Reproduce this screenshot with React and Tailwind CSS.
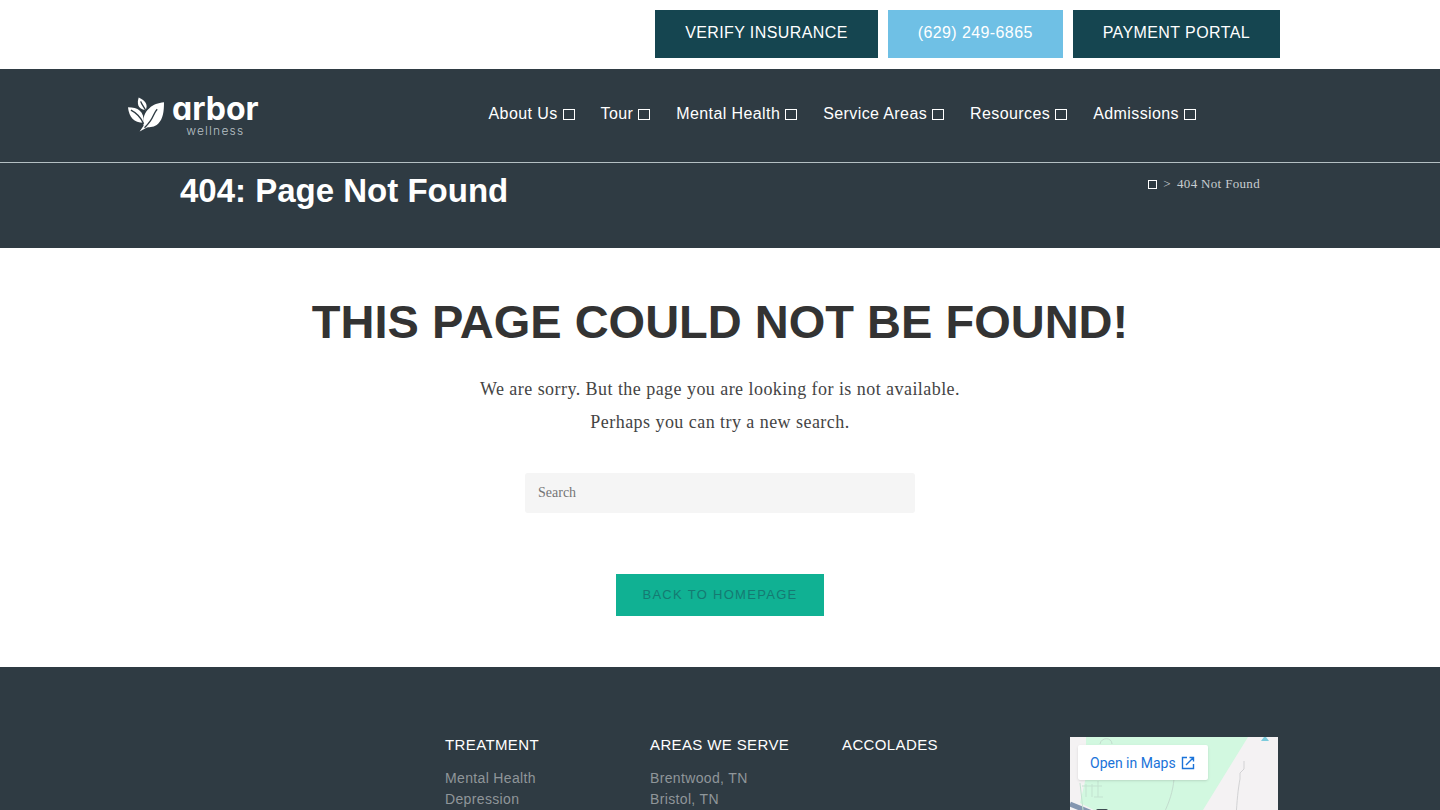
import React from "react";

const SANS = "font-['Liberation_Sans',Arial,sans-serif]";
const SERIF = "font-['Liberation_Serif','Times_New_Roman',serif]";

const actions = [
  { label: "VERIFY INSURANCE", className: "bg-[#154550]" },
  { label: "(629) 249-6865", className: "bg-[#6fc0e5]" },
  { label: "PAYMENT PORTAL", className: "bg-[#154550]" },
];

const menu = ["About Us", "Tour", "Mental Health", "Service Areas", "Resources", "Admissions"];

const footerColumns = [
  { title: "TREATMENT", links: ["Mental Health", "Depression"] },
  { title: "AREAS WE SERVE", links: ["Brentwood, TN", "Bristol, TN"] },
  { title: "ACCOLADES", links: [] },
];

const Logo = () => (
  <a href="#" className="flex items-start gap-2 text-white">
    <svg viewBox="0 0 37 36" className="mt-1 h-9 w-9 shrink-0" fill="currentColor">
      <path d="M11 0C18 3 21 8 18 13C10 12 9 6 11 0Z" />
      <path d="M0 10C10 10 17 14 16 26C6 26 1 20 0 10Z" />
      <path d="M37 5C37 15 36 22 31 27C27 31 23 30 19 31L12 35L16 29C15 21 17 15 22 11C26 7 31 6 37 5Z" />
      <g fill="none" stroke="#2f3b43" strokeWidth="1.4">
        <path d="M13 4C14 7 16 9 18 13" />
        <path d="M3 13C9 16 13 20 16 27" />
        <path d="M30 12C27 15 26 20 23 24C21 27 19 29 17 31" />
      </g>
    </svg>
    <span className="flex flex-col items-center">
      <span className="font-['Inter',sans-serif] text-[32px] leading-8 font-bold [font-feature-settings:'cv11','ss03']">
        arbor
      </span>
      <span className="font-['Inter',sans-serif] text-xs leading-3 font-light tracking-widest text-[#b9c1c6]">
        wellness
      </span>
    </span>
  </a>
);

const Header = () => (
  <header className="border-b border-[#b4bfc3] bg-[#2f3b43]">
    <div className="mx-auto flex max-w-[1200px] flex-wrap items-start justify-between px-2 pt-6 pb-[25px] lg:pr-[124px]">
      <Logo />
      <nav className="flex flex-wrap gap-x-[26px] pt-[9px]">
        {menu.map((item) => (
          <a key={item} href="#" className="flex items-center gap-[5px] text-base tracking-wide text-white">
            {item}
            <span className="h-[11px] w-3 border border-white" />
          </a>
        ))}
      </nav>
    </div>
  </header>
);

const MapCard = () => (
  <div className="relative min-h-[73px] overflow-hidden bg-[#f4f2f3]">
    <svg viewBox="0 0 208 73" preserveAspectRatio="xMinYMin slice" className="h-full w-full" fill="none">
      <path d="M16 0H178L133 73H24L10 66L16 40Z" fill="#d2f8e0" />
      <path d="M0 67L22 76" stroke="#8496b0" strokeWidth="5" />
      <path d="M10 46L13 73M16 47V60M22 47V60M28 44V60M12 49H32M24 60H33" stroke="#c3e2d0" />
      <path d="M30 7C31 0 42 0 42 7M104 42C103 54 99 66 94 76" stroke="#c3dcce" />
      <path d="M174 24V32L170 36V42C168 52 167 64 166 80" stroke="#d2d2d4" />
      <path d="M191 4L194 0H196L199 4Z" fill="#7ccbdc" />
      <rect x="26" y="72" width="12" height="6" rx="2" fill="#3c4a50" />
    </svg>
    <a
      href="#"
      className="absolute top-2 left-2 flex h-[35px] items-center gap-1 rounded-xs bg-white px-3 font-['Roboto',sans-serif] text-sm text-[#1a73d9] shadow"
    >
      Open in Maps
      <svg viewBox="0 0 16 16" className="h-4 w-4" fill="none" stroke="currentColor" strokeWidth="1.4">
        <path d="M7 2.5H2.5V13.5H13.5V9M9.5 2.5H13.5V6.5M13.5 2.5L6 10" />
      </svg>
    </a>
  </div>
);

const Footer = () => (
  <footer className="flex-1 bg-[#2f3b43] pt-[70px]">
    <div className="mx-auto grid max-w-[1120px] grid-cols-[285fr_205fr_192fr_228fr_208fr] pr-0.5">
      <div />
      {footerColumns.map((column) => (
        <div key={column.title}>
          <h4 className="text-[15px] leading-4 tracking-wide text-white">{column.title}</h4>
          <ul className="mt-[15px] text-sm leading-[21px] tracking-wide text-[#8f969a]">
            {column.links.map((link) => (
              <li key={link}>
                <a href="#">{link}</a>
              </li>
            ))}
          </ul>
        </div>
      ))}
      <MapCard />
    </div>
  </footer>
);

const App = () => {
  return (
    <div className={`flex min-h-screen flex-col bg-white ${SANS}`}>
      {/* Top bar */}
      <div className="mx-auto flex w-full max-w-[1120px] flex-wrap justify-end gap-2.5 pt-2.5 pb-[11px]">
        {actions.map((action) => (
          <a
            key={action.label}
            href="#"
            className={`px-[30px] pt-[11px] pb-[13px] text-base tracking-wide text-white ${action.className}`}
          >
            {action.label}
          </a>
        ))}
      </div>

      <Header />

      {/* Page title */}
      <div className="bg-[#2f3b43] pt-2 pb-[37px]">
        <div className="mx-auto flex max-w-[1080px] items-start justify-between">
          <h1 className="text-[33px] leading-10 font-bold text-white">404: Page Not Found</h1>
          <nav
            aria-label="Breadcrumb"
            className={`flex items-center gap-1.5 pt-[3px] text-[13px] leading-5 tracking-wide text-[#c8cdd0] ${SERIF}`}
          >
            <a href="#" aria-label="Home" className="h-[9px] w-[9px] border border-white" />
            <span>&gt;</span>
            <span>404 Not Found</span>
          </nav>
        </div>
      </div>

      {/* Content */}
      <main className="flex flex-col items-center px-5 pt-[46px] pb-[51px] text-center">
        <h2 className="text-[47px] leading-14 font-bold text-[#333333]">THIS PAGE COULD NOT BE FOUND!</h2>
        <p className={`mt-[23px] text-lg leading-[33px] tracking-wide text-[#444444] ${SERIF}`}>
          We are sorry. But the page you are looking for is not available.
          <br />
          Perhaps you can try a new search.
        </p>
        <form className="mt-[34px] w-full max-w-[390px]">
          <input
            type="search"
            aria-label="Search"
            placeholder="Search"
            className={`h-10 w-full rounded-[3px] bg-[#f5f5f5] px-[13px] text-sm text-[#333333] placeholder:text-[#757575] ${SERIF}`}
          />
        </form>
        <a
          href="#"
          className="mt-[61px] bg-[#10b193] px-[26px] py-[11px] text-[13px] leading-5 tracking-widest text-[#157a72]"
        >
          BACK TO HOMEPAGE
        </a>
      </main>

      <Footer />
    </div>
  );
};

export default App;
